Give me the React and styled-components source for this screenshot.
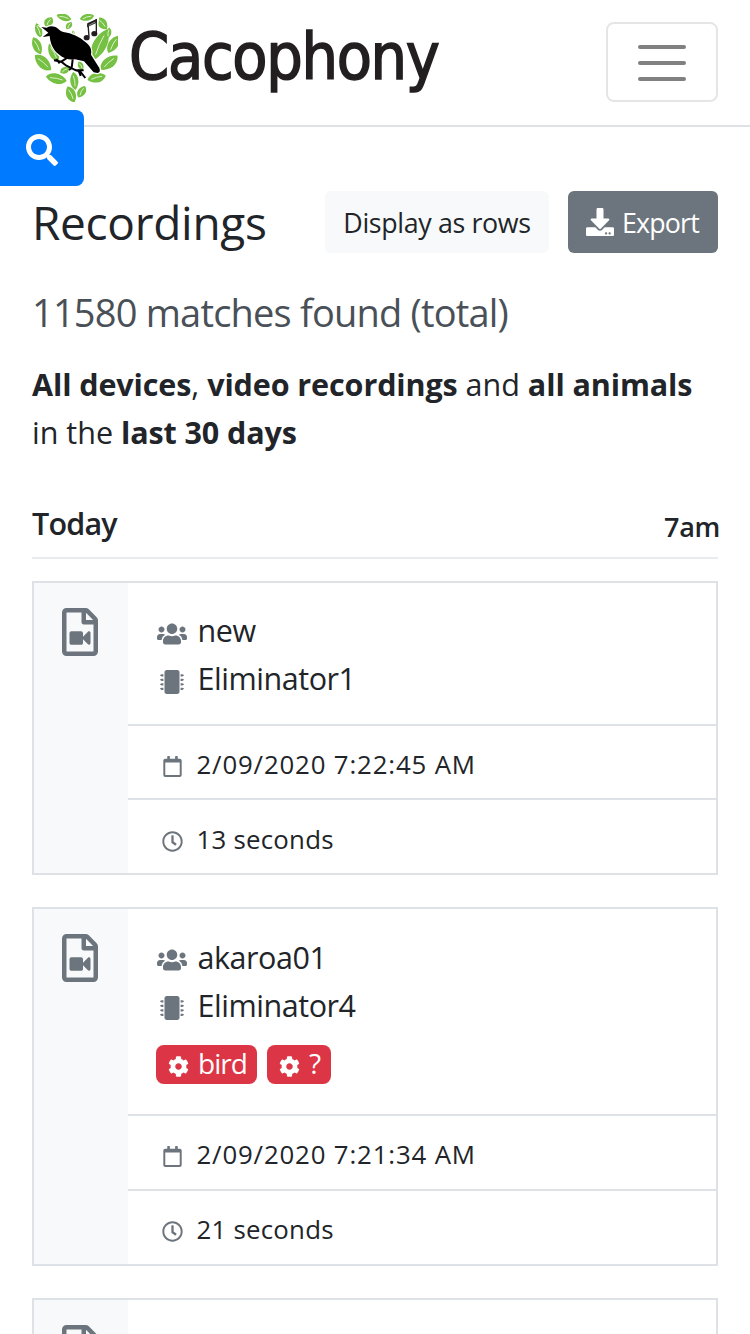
import React from "react";
import styled, { createGlobalStyle } from "styled-components";
import {
  FaSearch,
  FaDownload,
  FaUsers,
  FaMicrochip,
  FaCog,
  FaRegFileVideo,
  FaRegCalendar,
  FaRegClock,
} from "react-icons/fa";

const GlobalStyle = createGlobalStyle`
  *, *::before, *::after { box-sizing: border-box; }
  body {
    margin: 0;
    height: 1334px;
    overflow: hidden;
    background: #fff;
    color: #212529;
    font-family: "Open Sans", "Noto Sans", sans-serif;
    font-size: 30.5px;
    line-height: 48px;
  }
  svg { display: block; flex: none; }
`;

const Page = styled.div`
  position: relative;
  height: 1334px;
  overflow: hidden;
`;

const Navbar = styled.header`
  display: flex;
  justify-content: space-between;
  height: 127px;
  padding: 14px 32px 0;
  border-bottom: 2px solid #dee2e6;
`;

const Brand = styled.div`
  display: flex;
  gap: 11px;
`;

const Wordmark = styled.span`
  font-family: "DejaVu Sans Condensed", "DejaVu Sans", sans-serif;
  font-stretch: condensed;
  font-size: 64px;
  line-height: 87px;
  letter-spacing: -1.3px;
  color: #231f20;
  -webkit-text-stroke: 1.5px #231f20;
`;

const Toggler = styled.button`
  display: flex;
  flex-direction: column;
  justify-content: center;
  align-items: center;
  gap: 12px;
  width: 112px;
  height: 80px;
  margin-top: 8.4px;
  padding: 1px 0 0;
  border: 2px solid rgba(0, 0, 0, 0.1);
  border-radius: 8px;
  background: none;
`;

const TogglerBar = styled.span`
  width: 48px;
  height: 4px;
  border-radius: 2px;
  background: #808080;
`;

const SearchTab = styled.button`
  position: absolute;
  top: 110px;
  left: 0;
  display: flex;
  align-items: center;
  width: 84px;
  height: 76px;
  padding: 4px 0 0 26px;
  border: 0;
  border-radius: 0 8px 8px 0;
  background: #007bff;
  color: #fff;
`;

const Content = styled.main`
  padding: 64px 32px 0;
`;

const TitleRow = styled.div`
  display: flex;
  align-items: center;
  height: 62px;
`;

const Title = styled.h1`
  margin: 0 auto 0 0;
  font-size: 46px;
  font-weight: 400;
  line-height: 58px;
  letter-spacing: -0.3px;
`;

const Button = styled.button`
  display: flex;
  align-items: center;
  justify-content: center;
  gap: 8px;
  width: ${(p) => p.$width};
  height: 62px;
  margin-left: 19px;
  padding: 2px 0 0;
  border: 0;
  border-radius: 6px;
  background: ${(p) => (p.$dark ? "#6c757d" : "#f8f9fa")};
  color: ${(p) => (p.$dark ? "#fff" : "#212529")};
  font: 400 26.8px/42px "Open Sans", sans-serif;
  letter-spacing: ${(p) => (p.$dark ? "-0.85px" : "-0.35px")};
  white-space: nowrap;

  svg {
    margin-bottom: 2px;
    margin-left: -1px;
  }
`;

const Matches = styled.h2`
  margin: 35px 0 0;
  font-size: 38px;
  font-weight: 400;
  line-height: 48px;
  letter-spacing: -0.8px;
  color: #495057;
  white-space: nowrap;
`;

const Summary = styled.p`
  margin: 24px 0 0;

  b { letter-spacing: -0.1px; }
`;

const Line = styled.span`
  display: block;
  white-space: nowrap;
`;

const DayHeader = styled.div`
  display: flex;
  justify-content: space-between;
  height: 60px;
  margin-top: 43px;
  border-bottom: 2px solid #e9ecef;
  font-weight: 600;
`;

const Day = styled.span`
  line-height: 48px;
  letter-spacing: -0.8px;
`;

const Hour = styled.span`
  margin-right: -2px;
  font-size: 27px;
  line-height: 56px;
  letter-spacing: -0.3px;
`;

const Card = styled.article`
  display: flex;
  margin-top: ${(p) => (p.$first ? "22px" : "32px")};
  border: 2px solid #dee2e6;
`;

const Kind = styled.div`
  flex: none;
  width: 94px;
  padding: 25px 0 0 28px;
  background: #f8f9fa;
  color: #6c757d;

  svg { width: 36px; }
`;

const Details = styled.div`
  flex: 1;
`;

const Names = styled.div`
  padding: ${(p) => (p.$tagged ? "24px 28px 30px" : "23px 28px 22px")};
`;

const Row = styled.div`
  display: flex;
  align-items: center;
  height: 48px;
  letter-spacing: -0.45px;
`;

const Slot = styled.span`
  display: flex;
  justify-content: center;
  width: 32px;
  margin-right: 9.5px;
  padding-top: ${(p) => p.$drop || "6px"};
  color: #6c757d;
`;

const Fact = styled.div`
  display: flex;
  align-items: center;
  height: ${(p) => p.$height || "75px"};
  padding: ${(p) => p.$drop || "2px"} 28px 0;
  border-top: 2px solid #dee2e6;
  font-size: 25.8px;
  letter-spacing: ${(p) => p.$spacing};
`;

const FactSlot = styled(Slot)`
  margin-right: 8.5px;
`;

const Tags = styled.div`
  display: flex;
  gap: 10px;
  margin-top: 16px;
`;

const Tag = styled.span`
  display: flex;
  align-items: center;
  gap: 9px;
  width: ${(p) => p.$width};
  height: 39px;
  padding-left: 12px;
  border-radius: 8px;
  background: #dc3545;
  color: #fff;
  font-size: 28px;
  line-height: 36px;
  letter-spacing: -1px;

  svg { margin-top: 4px; }
  span { margin-top: -3px; }
`;

// x, y, length, width, angle
const LEAVES = [
  [132, 52, 46, 21, 15],
  [86, 66, 34, 24, -55],
  [147, 77, 26, 16, -55],
  [56, 91, 46, 20, 70],
  [51, 137, 56, 26, 65],
  [69, 188, 66, 32, 42],
  [109, 236, 64, 29, 12],
  [163, 243, 54, 24, 82],
  [153, 283, 52, 28, 65],
  [185, 275, 40, 23, -60],
  [101, 158, 60, 28, 62],
  [134, 211, 30, 20, -30],
  [182, 197, 28, 16, 60],
  [230, 233, 56, 29, -14],
  [267, 188, 66, 32, -40],
  [280, 133, 60, 29, -60],
  [239, 135, 104, 40, -65],
  [247, 70, 44, 26, 50],
  [201, 52, 44, 20, -15],
  [265, 99, 34, 17, -80],
  [160, 98, 14, 8, 60],
];

function Leaf({ shape: [x, y, length, width, angle] }) {
  const h = length / 2;
  const w = width * 0.68;
  return (
    <g transform={`translate(${x} ${y}) rotate(${angle})`}>
      <path
        d={`M${-h} 0C${-h * 0.6} ${-w} ${h * 0.4} ${-w} ${h} 0C${h * 0.6} ${w} ${-h * 0.4} ${w} ${-h} 0Z`}
        fill="#76c043"
      />
      <path d={`M${-h * 0.6} 1Q0 -3 ${h * 0.6} 0`} fill="none" stroke="#fff" strokeWidth="2" />
    </g>
  );
}

function Logo() {
  return (
    <svg width="86" height="88" viewBox="36 42 258 264">
      {LEAVES.map((shape, i) => (
        <Leaf key={i} shape={shape} />
      ))}
      <path
        d="M64 81L80 83Q92 76 104 80C116 84 118 93 130 96C156 100 178 110 196 126C212 138 216 150 213 164L238 204Q243 217 232 219L221 217L192 184C178 181 170 178 164 178C148 180 132 177 116 163C98 148 91 130 89 108L68 111L85 98Z"
        fill="#000"
        stroke="#fff"
        strokeWidth="8"
        paintOrder="stroke"
      />
      <path
        d="M102 181L124 185L139 197L168 211L181 215L196 234M124 185L142 173M109 177L119 190M158 178L155 204L147 210M168 211L191 211M177 215L182 228"
        fill="none"
        stroke="#000"
        strokeWidth="6"
      />
      <path d="M204 72L233 56L229 100L206 112Z" fill="#fff" stroke="#fff" strokeWidth="8" />
      <path d="M202 70L231 56L230 68L201 82Z" fill="#231f20" />
      <path d="M204 71L207 110M229 58L229 99" stroke="#231f20" strokeWidth="4" />
      <path d="M206 76L226 66" stroke="#fff" strokeWidth="1.5" />
      <ellipse cx="200" cy="113" rx="9" ry="8" fill="#231f20" />
      <ellipse cx="223" cy="101" rx="9" ry="8" fill="#231f20" />
    </svg>
  );
}

function Recording({ first, group, device, tags, time, duration }) {
  return (
    <Card $first={first}>
      <Kind>
        <FaRegFileVideo size={48} />
      </Kind>
      <Details>
        <Names $tagged={!!tags}>
          <Row>
            <Slot $drop={first ? "8px" : "6px"}>
              <FaUsers size={24} style={{ width: 30 }} />
            </Slot>
            {group}
          </Row>
          <Row>
            <Slot $drop={first ? "8px" : "6px"}>
              <FaMicrochip size={24} />
            </Slot>
            {device}
          </Row>
          {tags && (
            <Tags>
              {tags.map((t) => (
                <Tag key={t.label} $width={t.width}>
                  <FaCog size={21} />
                  <span>{t.label}</span>
                </Tag>
              ))}
            </Tags>
          )}
        </Names>
        <Fact $spacing="0.85px" $height={first ? "74px" : "75px"} $drop={first ? "4px" : "2px"}>
          <FactSlot $drop={first ? "4px" : "6px"}>
            <FaRegCalendar size={21} />
          </FactSlot>
          {time}
        </Fact>
        <Fact $spacing="0.25px" $drop={first ? "4px" : "2px"}>
          <FactSlot>
            <FaRegClock size={21} />
          </FactSlot>
          {duration}
        </Fact>
      </Details>
    </Card>
  );
}

export default function App() {
  return (
    <Page>
      <GlobalStyle />
      <Navbar>
        <Brand>
          <Logo />
          <Wordmark>Cacophony</Wordmark>
        </Brand>
        <Toggler aria-label="Toggle navigation">
          <TogglerBar />
          <TogglerBar />
          <TogglerBar />
        </Toggler>
      </Navbar>
      <SearchTab aria-label="Search">
        <FaSearch size={32} />
      </SearchTab>
      <Content>
        <TitleRow>
          <Title>Recordings</Title>
          <Button $width="224px">Display as rows</Button>
          <Button $width="150px" $dark>
            <FaDownload size={28} />
            Export
          </Button>
        </TitleRow>
        <Matches>11580 matches found (total)</Matches>
        <Summary>
          <Line>
            <b>All devices</b>, <b>video recordings</b> and <b>all animals</b>
          </Line>
          <Line>
            in the <b>last 30 days</b>
          </Line>
        </Summary>
        <DayHeader>
          <Day>Today</Day>
          <Hour>7am</Hour>
        </DayHeader>
        <Recording first group="new" device="Eliminator1" time="2/09/2020 7:22:45 AM" duration="13 seconds" />
        <Recording
          group="akaroa01"
          device="Eliminator4"
          tags={[
            { label: "bird", width: "101px" },
            { label: "?", width: "64px" },
          ]}
          time="2/09/2020 7:21:34 AM"
          duration="21 seconds"
        />
        <Card>
          <Kind>
            <FaRegFileVideo size={48} />
          </Kind>
          <Details />
        </Card>
      </Content>
    </Page>
  );
}
